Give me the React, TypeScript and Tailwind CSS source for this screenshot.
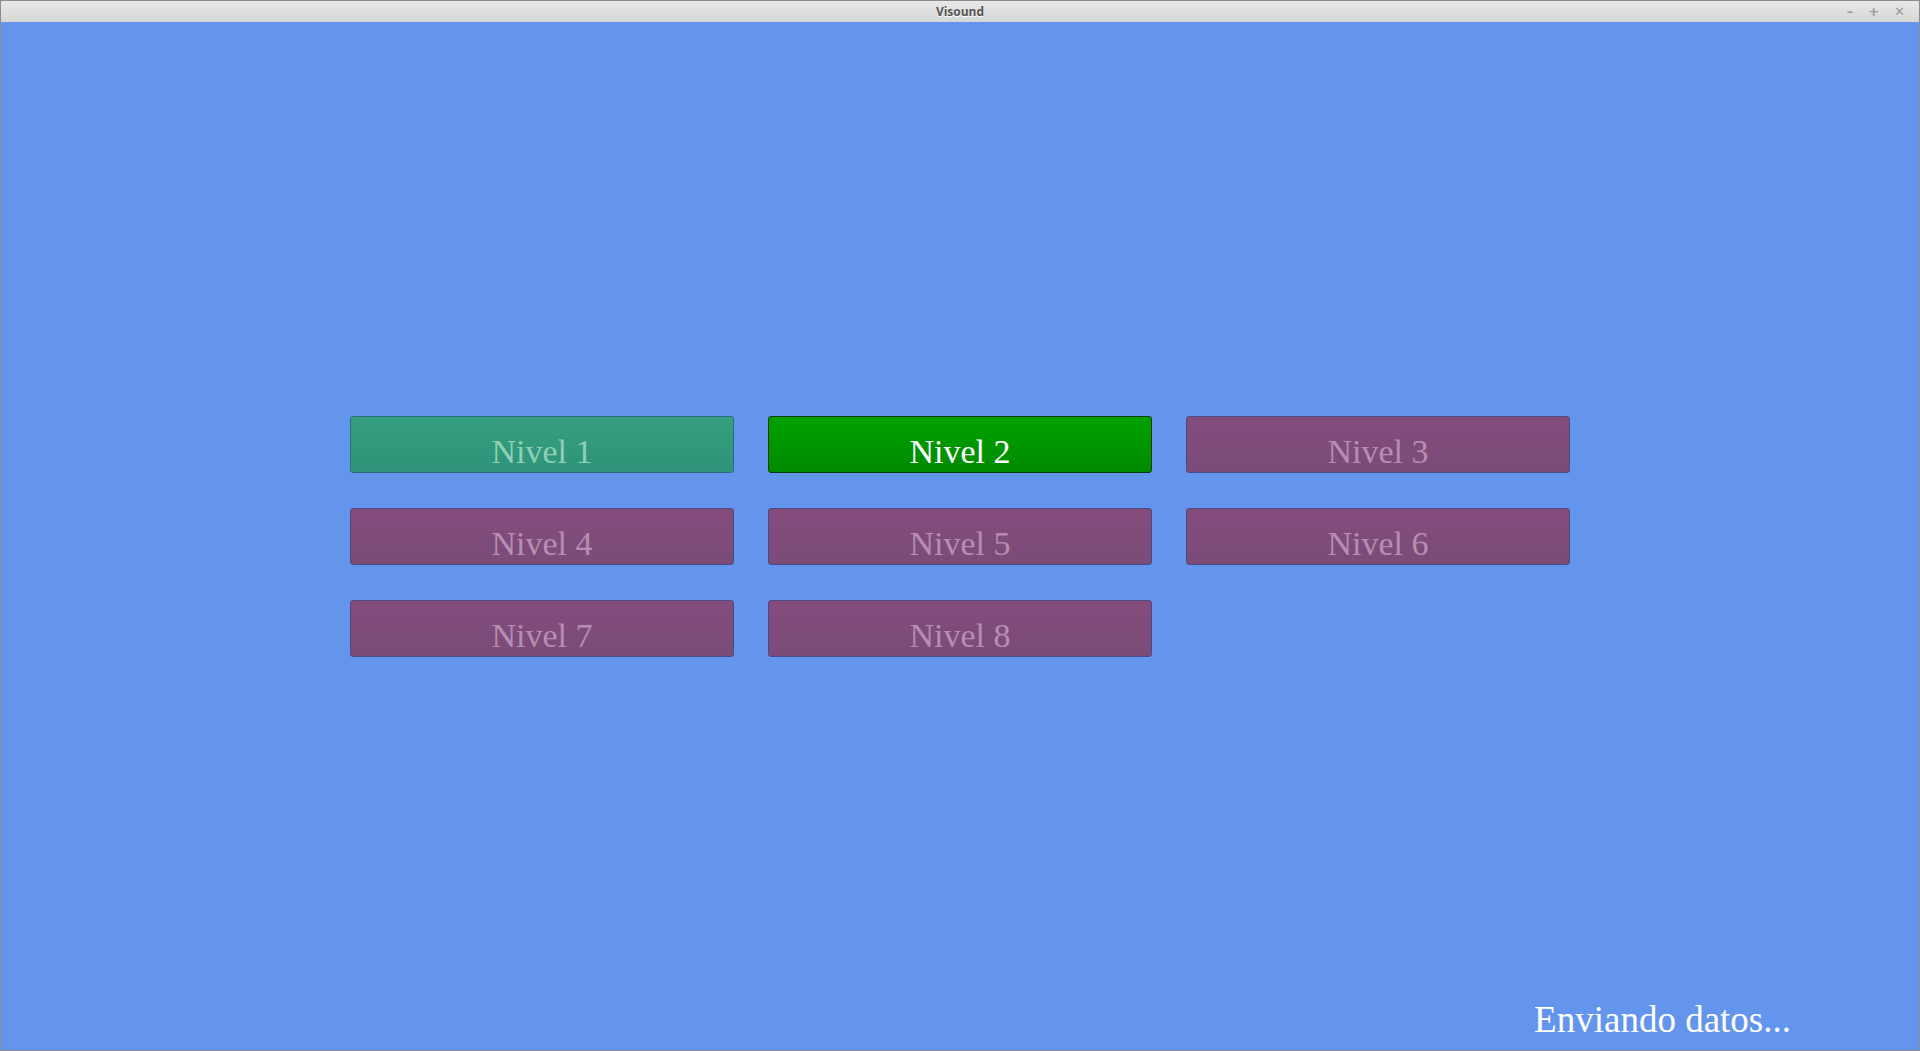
import React from 'react';

type LevelState = 'done' | 'current' | 'locked';

const levels: { n: number; state: LevelState }[] = [
  { n: 1, state: 'done' },
  { n: 2, state: 'current' },
  { n: 3, state: 'locked' },
  { n: 4, state: 'locked' },
  { n: 5, state: 'locked' },
  { n: 6, state: 'locked' },
  { n: 7, state: 'locked' },
  { n: 8, state: 'locked' },
];

const styles: Record<LevelState, string> = {
  done: 'bg-gradient-to-b from-[#35a07e] to-[#2f9379] border-[#2e6a80] text-[#8ecfb6]',
  current: 'bg-gradient-to-b from-[#00a200] to-[#008a00] border-[#0b3a0b] text-white',
  locked: 'bg-gradient-to-b from-[#844c7d] to-[#7a4c77] border-[#4a4a85] text-[#b98db2]',
};

const TitleBar: React.FC = () => (
  <div className="relative h-[21px] shrink-0 bg-gradient-to-b from-[#e8e8e8] to-[#d6d6d6] flex items-center justify-center">
    <span className="font-['Open_Sans',sans-serif] text-[12px] font-bold text-[#555] [text-shadow:0_1px_0_#fff] leading-none">
      Visound
    </span>
    <div className="absolute right-[14px] top-0 h-full flex items-center gap-[15px] text-[#9a9a9a] font-['DejaVu_Sans',sans-serif] font-bold text-[13px] leading-none">
      <span>–</span>
      <span>+</span>
      <span>✕</span>
    </div>
  </div>
);

const LevelButton: React.FC<{ n: number; state: LevelState }> = ({ n, state }) => (
  <button
    className={`h-[57px] w-[384px] rounded-[3px] border flex items-start justify-center pt-[18px] font-['Liberation_Serif',serif] text-[34px] leading-none ${styles[state]}`}
  >
    Nivel {n}
  </button>
);

const App: React.FC = () => {
  return (
    <div className="w-screen h-[1051px] flex flex-col border border-[#8c8c8c] bg-[#6495ec] overflow-hidden">
      <TitleBar />
      <div className="flex-1 grid grid-rows-[1fr_auto_1fr]">
        <div />
        <div className="flex justify-center">
          <div className="grid grid-cols-[384px_384px_384px] gap-x-[34px] gap-y-[35px]">
            {levels.map(l => (
              <LevelButton key={l.n} n={l.n} state={l.state} />
            ))}
          </div>
        </div>
        <div className="flex items-end justify-end pr-[128px] pb-[12px]">
          <span className="font-['Liberation_Serif',serif] text-[37px] leading-none text-white">
            Enviando datos...
          </span>
        </div>
      </div>
    </div>
  );
};

export default App;
